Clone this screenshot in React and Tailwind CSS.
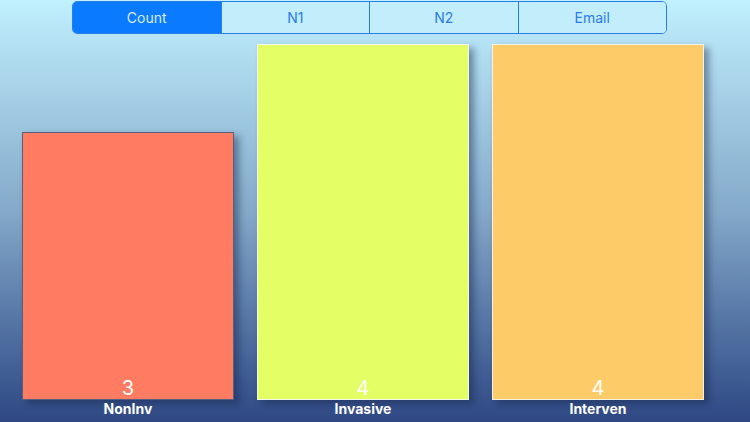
import React from "react";

const tabs = ["Count", "N1", "N2", "Email"];

const bars = [
  { label: "NonInv", value: 3, height: "h-[268px]", color: "bg-[#ff7b61]", border: "border-[#55607e]" },
  { label: "Invasive", value: 4, height: "h-[356px]", color: "bg-[#e4fe66]", border: "border-[#f4f8ec]" },
  { label: "Interven", value: 4, height: "h-[356px]", color: "bg-[#fecb69]", border: "border-[#f8f1e4]" },
];

export default function App() {
  const [active, setActive] = React.useState(0);

  return (
    <div
      className="w-[750px] h-[422px] overflow-hidden flex flex-col bg-linear-to-b from-[#c1f0fe] via-[#84a9c9] to-[#2f4884]"
      style={{ fontFamily: "Inter, 'Liberation Sans', sans-serif" }}
    >
      <div className="pl-[72px] pt-px">
        <div className="flex w-[595px] h-[33px] rounded-[5px] border border-[#2a7de8] overflow-hidden">
          {tabs.map((t, i) => (
            <button
              key={t}
              onClick={() => setActive(i)}
              className={`flex-1 flex items-center justify-center text-[14px] ${
                i > 0 ? "border-l border-[#2a7de8]" : ""
              } ${active === i ? "bg-[#0a7afe] text-[#d8ecff]" : "bg-[#c2eefc] text-[#2b7be6]"}`}
            >
              {t}
            </button>
          ))}
        </div>
      </div>

      <div className="flex-1 flex items-end gap-[23px] pl-[22px] pb-[5px]">
        {bars.map((b) => (
          <div key={b.label} className="w-[212px] flex flex-col items-center">
            <div
              className={`w-full ${b.height} ${b.color} border ${b.border} shadow-[5px_4px_7px_rgba(20,35,70,0.45)] flex items-end justify-center`}
            >
              <span className="text-white text-[20px] leading-none mb-[1px]">{b.value}</span>
            </div>
            <div className="text-white font-bold text-[14px] leading-[16px] mt-[1px]">{b.label}</div>
          </div>
        ))}
      </div>
    </div>
  );
}
